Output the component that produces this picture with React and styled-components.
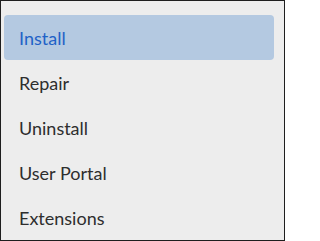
import React from "react";
import styled, { createGlobalStyle } from "styled-components";

const Global = createGlobalStyle`
  html, body { margin: 0; padding: 0; background: #ffffff; }
  * { box-sizing: border-box; }
`;

const Panel = styled.nav`
  width: 285px;
  height: 241px;
  border: 1px solid #1e1e1e;
  background: #ededed;
  padding: 14px 10px 0 3px;
  display: flex;
  flex-direction: column;
  font-family: Lato, "Noto Sans", sans-serif;
`;

const Item = styled.div`
  height: 45px;
  display: flex;
  align-items: center;
  padding-left: 15px;
  font-size: 18px;
  border-radius: 4px;
  color: ${(p) => (p.$active ? "#1f62c7" : "#2e2e2e")};
  background: ${(p) => (p.$active ? "#b4c9e1" : "transparent")};
`;

const items = ["Install", "Repair", "Uninstall", "User Portal", "Extensions"];

export default function App() {
  return (
    <>
      <Global />
      <Panel>
        {items.map((t, i) => (
          <Item key={t} $active={i === 0}>
            {t}
          </Item>
        ))}
      </Panel>
    </>
  );
}
